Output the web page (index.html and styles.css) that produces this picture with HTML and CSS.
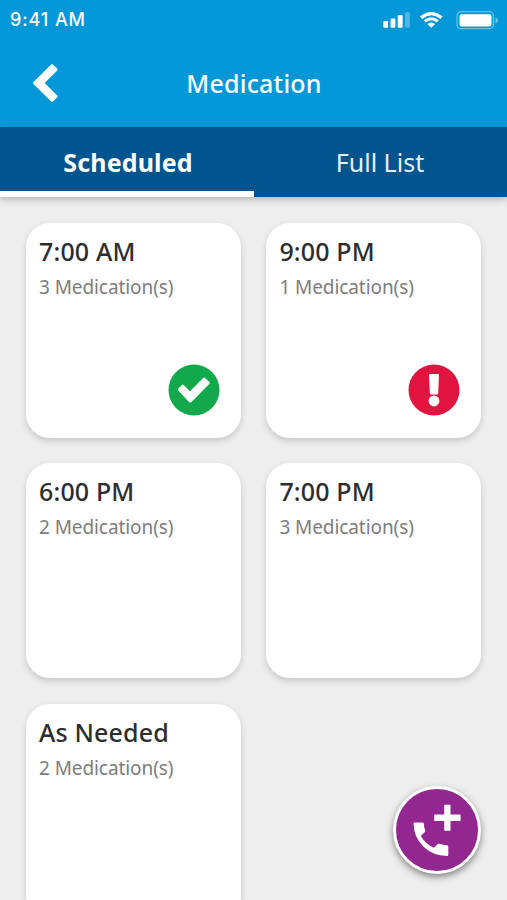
FILE: index.html
```html
<!DOCTYPE html>
<html lang="en">
<head>
<meta charset="utf-8">
<title>Medication</title>
<link rel="stylesheet" href="styles.css">
</head>
<body>
<div class="app">
  <header class="header">
    <div class="status">
      <span class="clock">9:41 AM</span>
      <svg class="status-icons" viewBox="0 0 118 22" width="118" height="22" fill="#fff">
        <rect x="3.3" y="11" width="4.8" height="6.8" rx="1"/>
        <rect x="10.6" y="8.5" width="4.8" height="9.3" rx="1"/>
        <rect x="17.7" y="5" width="5" height="12.8" rx="1"/>
        <rect x="25" y="2.3" width="4.8" height="15.5" rx="1" opacity=".3"/>
        <path d="M40 6.6Q51.2-2.4 62.5 6.6L60.300 8.900Q51.200 1.700 42.200 8.900Z"/>
        <path d="M43.700 10.300Q51.200 4 58.800 10.300L56.600 12.500Q51.200 8 45.900 12.500Z"/>
        <path d="M47.400 14Q51.200 10.800 55.100 14L51.200 17.700Z"/>
        <rect x="77" y="1.700" width="36.500" height="17" rx="4" fill="none" stroke="#fff" stroke-opacity=".4" stroke-width="1.300"/>
        <rect x="79.500" y="4.200" width="32" height="12.200" rx="1.800"/>
        <path d="M115.500 7.200Q117.800 8 117.800 10.300T115.500 13.400Z" opacity=".45"/>
      </svg>
    </div>
    <div class="titlebar">
      <svg class="back" viewBox="0 0 28 40" width="28" height="40"><path d="M1.500 19Q.5 20 1.500 21L19.200 38.400Q20 39.200 20.800 38.400L25.300 34.300Q26.200 33.500 25.300 32.600L12.600 20L25.300 7.400Q26.200 6.500 25.300 5.700L20.800 1.400Q20 .7 19.200 1.400Z" fill="#fff"/></svg>
      <h1 class="title">Medication</h1>
    </div>
  </header>
  <nav class="tabs">
    <a class="tab tab-active">Scheduled</a>
    <a class="tab">Full List</a>
  </nav>
  <main class="grid">
    <section class="card">
      <h2 class="time">7:00 AM</h2><p class="count">3 Medication(s)</p>
      <svg class="badge" viewBox="0 0 52 52" width="52" height="52"><circle cx="26" cy="26" r="25.500" fill="#12a84c"/><path d="M10.300 24.500L13.900 20.900Q14.800 20.100 15.700 20.900L22 27.200L35.200 13.900Q36.100 13.100 37 13.900L41.500 18Q42.300 18.800 41.500 19.700L23.200 38.200Q22.200 39 21.200 38.200L10.300 26.600Q9.500 25.500 10.300 24.500Z" fill="#fff"/></svg>
    </section>
    <section class="card">
      <h2 class="time">9:00 PM</h2><p class="count">1 Medication(s)</p>
      <svg class="badge" viewBox="0 0 52 52" width="52" height="52"><circle cx="26" cy="26" r="25.500" fill="#e0143f"/><path d="M22 10H30Q31 10 31 11L30.200 29Q30.100 30.500 28.800 30.500H23.200Q21.900 30.500 21.800 29L21 11Q21 10 22 10Z" fill="#fff"/><circle cx="26" cy="37" r="5.400" fill="#fff"/></svg>
    </section>
    <section class="card"><h2 class="time">6:00 PM</h2><p class="count">2 Medication(s)</p></section>
    <section class="card"><h2 class="time">7:00 PM</h2><p class="count">3 Medication(s)</p></section>
    <section class="card"><h2 class="time">As Needed</h2><p class="count">2 Medication(s)</p></section>
  </main>
  <button class="fab" aria-label="Add call">
    <svg viewBox="0 0 82 82" width="82" height="82" fill="#fff"><path d="M18.700 33.500H26.500Q27.600 33.500 27.800 34.600Q28 38.500 29.200 41.500Q29.500 42.500 28.700 43.300L24.800 47Q29.300 55 37.800 58.700L41.500 55.300Q42.300 54.500 43.400 54.800Q47 56 51.200 56.200Q52.300 56.400 52.300 57.400V65.700Q52.300 66.900 51.200 66.900Q37 66.900 27.300 57.500Q17.600 48 17.600 34.600Q17.600 33.500 18.700 33.500Z"/><path d="M48.700 15.700H54.500V25.600H64.600V31.900H54.500V41.800H48.200V31.900H38.200V25.600H48.200V16.200Q48.200 15.700 48.700 15.700Z"/></svg>
  </button>
</div>
</body>
</html>
```
FILE: styles.css
```css
* { box-sizing: border-box; }
body { margin: 0; font-family: "Noto Sans", "Open Sans", sans-serif; background: #eee; }
h1, h2, p { margin: 0; }
.app { position: relative; height: 900px; overflow: hidden; background: #eee; }
.header { height: 127px; background: #0298d8; color: #fff; }
.status { height: 40px; padding: 0 9px 0 10px; display: flex; align-items: center; justify-content: space-between; }
.clock { font: 500 18px/24px Inter, sans-serif; letter-spacing: .9px; }
.status-icons { display: block; margin-top: 1px; }
.titlebar { height: 87px; padding: 0 32px; display: grid; grid-template-columns: 28px 1fr 28px; }
.back { display: block; margin-top: 23px; }
.title { margin-top: 26px; padding-left: 1px; text-align: center; font-size: 25px; line-height: 34px; font-weight: 500; letter-spacing: .2px; }
.tabs { position: relative; height: 70px; display: grid; grid-template-columns: 254px 253px; background: #01548e; box-shadow: 0 3px 6px rgba(0,0,0,.22); }
.tab { color: #e6f0fa; text-align: center; font-size: 25px; line-height: 34px; padding: 18px 1px 0 0; border-bottom: 6px solid transparent; }
.tab-active { color: #fff; font-weight: 700; letter-spacing: .15px; padding: 18px 0 0 2px; border-bottom-color: #fff; }
.grid { display: grid; grid-template-columns: 215px 215px; grid-auto-rows: 215px; gap: 25.400px; padding: 26px 26px 0; }
.card { display: flex; flex-direction: column; height: 215px; padding: 11px 13px 12px; border-radius: 24px; background: #fff; box-shadow: 0 3px 6px rgba(0,0,0,.16); }
.time { font-size: 25px; line-height: 34px; font-weight: 500; letter-spacing: .15px; color: #2d2d2d; }
.count { margin-top: 6px; font-size: 19px; line-height: 26px; letter-spacing: -.08px; color: #7d7d7d; }
.badge { display: block; margin: auto 8px 10px auto; }
.fab { position: absolute; left: 393px; top: 786px; width: 88px; height: 88px; padding: 0; border: 3px solid #fff; border-radius: 50%; background: #92278f; box-shadow: 0 3px 7px rgba(0,0,0,.45); }
.fab svg { display: block; }
```
